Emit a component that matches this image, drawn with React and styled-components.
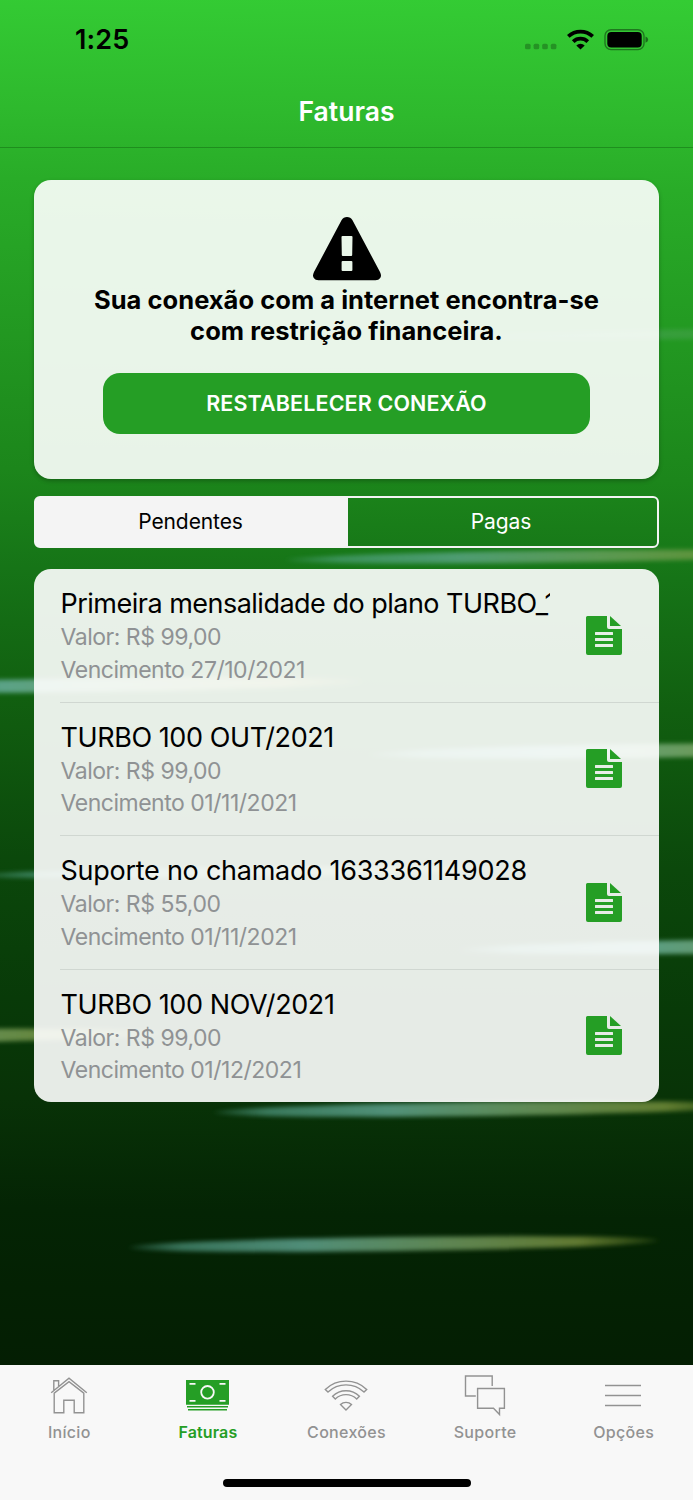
import styled, { createGlobalStyle, css } from "styled-components";

// Data
const invoices = [
  {
    title: "Primeira mensalidade do plano TURBO_100",
    value: "99,00",
    due: "27/10/2021",
    tracking: -0.51,
  },
  {
    title: "TURBO 100 OUT/2021",
    value: "99,00",
    due: "01/11/2021",
    tracking: -0.42,
  },
  {
    title: "Suporte no chamado 1633361149028",
    value: "55,00",
    due: "01/11/2021",
    tracking: -0.26,
  },
  {
    title: "TURBO 100 NOV/2021",
    value: "99,00",
    due: "01/12/2021",
    tracking: -0.42,
  },
];

const streaks = [
  { x: 430, y: 338, opacity: 0.3, size: 5 },
  { x: 285, y: 560.5, opacity: 0.8, size: 6 },
  { x: -170, y: 689, opacity: 1, size: 7 },
  { x: 370, y: 755, opacity: 1, size: 7 },
  { x: -28, y: 876, opacity: 0.8, size: 5 },
  { x: 460, y: 950.5, opacity: 1, size: 7 },
  { x: -370, y: 1040.5, opacity: 0.95, size: 7 },
  { x: 213, y: 1113, opacity: 0.9, size: 7 },
  { x: 128, y: 1248, opacity: 0.9, size: 7 },
];

// Icons
const HomeIcon = () => (
  <svg width="38" height="38" viewBox="0 -0.5 38 38">
    <path d="M1.2 16.2 19 1.6 36.8 16.2M3.8 13.6V4.2H8.6V9.6M4.2 16.6V36.3H13.8V23.8H24.2V36.3H33.8V16.6L19 5.2Z" />
  </svg>
);

const MoneyIcon = () => (
  <svg width="44" height="38" viewBox="0 0 44 38">
    <path className="fill" d="M0 4H43V28.800H0ZM1 30H42V31.600H1ZM2 33H41V34.600H2Z" />
    <circle className="line" cx="21.500" cy="16.300" r="6.300" />
    <path className="line" d="M3.500 7.800H9.500M33.500 7.800H39.500M3.500 24.800H9.500M33.500 24.800H39.500" />
  </svg>
);

const SignalIcon = () => (
  <svg width="44" height="38" viewBox="0 0 44 38">
    <path d="M1.300 13.400A30 30 0 0 1 42.700 13.400L40 16A26.200 26.200 0 0 0 4 16Z" />
    <path d="M8.600 20.200A19.200 19.200 0 0 1 35.400 20.200L32.700 22.900A15.400 15.400 0 0 0 11.300 22.900Z" />
    <path d="M16.500 28.600A7.800 7.800 0 0 1 27.500 28.600L22 34Z" />
  </svg>
);

const ChatIcon = () => (
  <svg width="42" height="38" viewBox="0 3.500 42 38">
    <path d="M11.800 23.500H1.500V3.500H28.200V13.500M13.600 16H40.400V35.800H35.500V42L29.500 35.800H13.600Z" />
  </svg>
);

const MenuIcon = () => (
  <svg width="39" height="38" viewBox="0 0 39 38">
    <path d="M1 9.500H37M1 19.500H37M1 29.500H37" />
  </svg>
);

const tabs = [
  { name: "Início", Icon: HomeIcon },
  { name: "Faturas", Icon: MoneyIcon },
  { name: "Conexões", Icon: SignalIcon },
  { name: "Suporte", Icon: ChatIcon },
  { name: "Opções", Icon: MenuIcon },
];

// Components
function Background() {
  return (
    <Backdrop viewBox="0 0 693 1500">
      <defs>
        <linearGradient id="streak">
          <stop offset="0" stopColor="#5fb09d" stopOpacity="0.2" />
          <stop offset="0.1" stopColor="#5fae9a" stopOpacity="0.65" />
          <stop offset="0.33" stopColor="#68ae9c" stopOpacity="0.85" />
          <stop offset="0.6" stopColor="#81ac72" stopOpacity="0.8" />
          <stop offset="0.85" stopColor="#8ea348" stopOpacity="0.75" />
          <stop offset="1" stopColor="#8ea338" stopOpacity="0.2" />
        </linearGradient>
        <filter id="soft" x="-5%" y="-80%" width="110%" height="260%">
          <feGaussianBlur stdDeviation="3 2.2" />
        </filter>
      </defs>
      {streaks.map((s) => (
        <ellipse
          key={s.y}
          cx={s.x + 266}
          cy={s.y - 4}
          rx="264"
          ry={s.size}
          fill="url(#streak)"
          filter="url(#soft)"
          opacity={s.opacity}
          transform={`rotate(-0.75 ${s.x + 266} ${s.y - 4})`}
        />
      ))}
    </Backdrop>
  );
}

function StatusIcons() {
  return (
    <svg width="126" height="24" viewBox="0 0 126 24">
      <g fill="#000" fillOpacity="0.25">
        <rect x="2" y="15.800" width="5.600" height="5.400" rx="1.500" />
        <rect x="10.600" y="15.800" width="5.600" height="5.400" rx="1.500" />
        <rect x="19.200" y="15.800" width="5.600" height="5.400" rx="1.500" />
        <rect x="27.800" y="15.800" width="5.600" height="5.400" rx="1.500" />
      </g>
      <g fill="none" stroke="#000" strokeWidth="3.800">
        <path d="M45.300 8.300A18 18 0 0 1 69.700 8.300" />
        <path d="M50.200 13.600A10.600 10.600 0 0 1 64.800 13.600" />
      </g>
      <path d="M53.300 17.400A6 6 0 0 1 61.700 17.400L57.500 21.600Z" />
      <rect x="82" y="1.800" width="39" height="19.800" rx="6" fill="none" stroke="#000" strokeOpacity="0.4" strokeWidth="1.400" />
      <rect x="84.300" y="4" width="34.400" height="15.400" rx="4" />
      <path d="M122.500 8.600Q125.200 9.600 125.200 11.700T122.500 14.800Z" fillOpacity="0.45" />
    </svg>
  );
}

function WarningIcon() {
  return (
    <svg width="70" height="66" viewBox="0 0 70 66">
      <path
        fillRule="evenodd"
        d="M29.500 4.300Q31.500 1 35 1T40.500 4.300L68 56Q70 60 68 62.300Q66.800 64.300 63.500 64.300H6.500Q3.200 64.300 2 62.300Q0 60 2 56ZM29.500 21Q29.500 20 30.500 20H39.500Q40.500 20 40.500 21L40.200 39Q40.200 40 39.200 40H30.800Q29.800 40 29.800 39ZM30.600 45H39.400Q40.400 45 40.400 46V54Q40.400 55 39.400 55H30.600Q29.600 55 29.600 54V46Q29.600 45 30.600 45Z"
      />
    </svg>
  );
}

function DocumentIcon() {
  return (
    <svg width="38" height="40" viewBox="0 0 38 40" fill="#259e25">
      <path
        fillRule="evenodd"
        d="M2.500 0H22V11Q22 13 24 13H37V37Q37 39 35 39H3Q1 39 1 37V1.500Q1 0 2.500 0ZM10.500 16Q10 16 10 16.500V18.500Q10 19 10.500 19H27.500Q28 19 28 18.500V16.500Q28 16 27.500 16ZM10.500 22Q10 22 10 22.500V24.500Q10 25 10.500 25H27.500Q28 25 28 24.500V22.500Q28 22 27.500 22ZM10.500 28Q10 28 10 28.500V30.500Q10 31 10.500 31H27.500Q28 31 28 30.500V28.500Q28 28 27.500 28Z"
      />
      <path d="M25 0V10H36Z" />
    </svg>
  );
}

function Invoice({ title, value, due, tracking }) {
  return (
    <InvoiceRow>
      <InvoiceInfo>
        <InvoiceTitle $tracking={tracking}>{title}</InvoiceTitle>
        <InvoiceText>Valor: R$ {value}</InvoiceText>
        <InvoiceText>Vencimento {due}</InvoiceText>
      </InvoiceInfo>
      <DocumentIcon />
    </InvoiceRow>
  );
}

function App() {
  return (
    <Screen>
      <GlobalStyle />
      <Background />
      <StatusBar>
        <Time>1:25</Time>
        <StatusIcons />
      </StatusBar>
      <Header>
        <HeaderTitle>Faturas</HeaderTitle>
      </Header>
      <Content>
        <AlertCard>
          <WarningIcon />
          <AlertText>
            Sua conexão com a internet encontra-se
            <br />
            com restrição financeira.
          </AlertText>
          <RestoreButton>RESTABELECER CONEXÃO</RestoreButton>
        </AlertCard>
        <Segment>
          <SegmentButton $active>Pendentes</SegmentButton>
          <SegmentButton>Pagas</SegmentButton>
        </Segment>
        <InvoiceList>
          {invoices.map((invoice) => (
            <Invoice key={invoice.title} {...invoice} />
          ))}
        </InvoiceList>
      </Content>
      <TabBar>
        <Tabs>
          {tabs.map(({ name, Icon }) => (
            <Tab key={name} $active={name === "Faturas"}>
              <TabIcon>
                <Icon />
              </TabIcon>
              {name}
            </Tab>
          ))}
        </Tabs>
        <HomeIndicator />
      </TabBar>
    </Screen>
  );
}

// Style
const GlobalStyle = createGlobalStyle`
  * {
    box-sizing: border-box;
  }
  body {
    margin: 0;
    font-family: Inter, "Liberation Sans", sans-serif;
  }
  svg {
    display: block;
    flex-shrink: 0;
  }
`;

const Screen = styled.div`
  position: relative;
  width: 693px;
  height: 1500px;
  display: flex;
  flex-direction: column;
  overflow: hidden;
  background: linear-gradient(
    181deg,
    #34cc34 0,
    #2eb92d 120px,
    #29ac28 190px,
    #1c861b 480px,
    #167417 580px,
    #115f10 710px,
    #0b480b 870px,
    #083a08 1010px,
    #083207 1110px,
    #042404 1220px,
    #042103 1300px,
    #041e03 1380px
  );
`;

const Backdrop = styled.svg`
  position: absolute;
  inset: 0;
  width: 100%;
  height: 100%;
`;

const StatusBar = styled.div`
  position: relative;
  height: 80px;
  padding: 0 44px 0 75px;
  display: flex;
  justify-content: space-between;
  align-items: center;
`;

const Time = styled.span`
  font-size: 27px;
  font-weight: 600;
  line-height: 32px;
  letter-spacing: 0.1px;
`;

const Header = styled.header`
  position: relative;
  height: 68px;
  padding-top: 15px;
  display: flex;
  justify-content: center;
  border-bottom: 1px solid rgba(0, 60, 0, 0.3);
`;

const HeaderTitle = styled.h1`
  margin: 0;
  font-size: 26.5px;
  font-weight: 600;
  line-height: 32px;
  color: #fff;
`;

const Content = styled.main`
  position: relative;
  flex: 1;
  padding: 32px 34px 0;
  display: flex;
  flex-direction: column;
`;

const AlertCard = styled.section`
  height: 299px;
  padding-top: 36px;
  display: flex;
  flex-direction: column;
  align-items: center;
  border-radius: 17px;
  background: rgba(255, 255, 255, 0.9);
  box-shadow: 0 2px 4px rgba(0, 0, 0, 0.25);
`;

const AlertText = styled.p`
  margin: 2px 0 0;
  font-size: 25.5px;
  font-weight: 700;
  line-height: 31px;
  letter-spacing: 0.03px;
  text-align: center;
  white-space: nowrap;
`;

const RestoreButton = styled.button`
  width: 487px;
  height: 61px;
  margin-top: 27px;
  padding: 0 0 1px;
  border: none;
  border-radius: 17px;
  background: #259e25;
  color: #fff;
  font-family: inherit;
  font-size: 21.5px;
  font-weight: 600;
  letter-spacing: 0.12px;
`;

const Segment = styled.div`
  height: 52px;
  margin-top: 16.5px;
  display: flex;
  border: 2px solid #f4f4f4;
  border-radius: 6px;
`;

const SegmentButton = styled.button`
  width: ${(props) => (props.$active ? "312px" : "309px")};
  padding: 0 3px 1px 0;
  border: none;
  background: transparent;
  color: #fff;
  font-family: inherit;
  font-size: 21px;
  letter-spacing: -0.1px;
  ${(props) =>
    props.$active &&
    css`
      background: #f4f4f4;
      color: #000;
    `}
`;

const InvoiceList = styled.ul`
  height: 533px;
  margin: 21.5px 0 0;
  padding: 0;
  display: flex;
  flex-direction: column;
  list-style: none;
  border-radius: 17px;
  background: rgba(255, 255, 255, 0.9);
`;

const InvoiceRow = styled.li`
  flex: 1;
  margin-left: 26px;
  padding: 1px 36px 0 0;
  display: flex;
  align-items: center;
  justify-content: space-between;
  &:not(:last-child) {
    border-bottom: 1px solid #d0d7d1;
  }
`;

const InvoiceInfo = styled.div`
  width: 490px;
  padding: 2px 0 0 0.5px;
`;

const InvoiceTitle = styled.h2`
  margin: 0;
  overflow: hidden;
  font-size: 27px;
  font-weight: 400;
  line-height: 34px;
  letter-spacing: ${(props) => props.$tracking}px;
  white-space: nowrap;
`;

const InvoiceText = styled.p`
  margin: 0;
  font-size: 23px;
  line-height: 32.5px;
  letter-spacing: -0.48px;
  color: #8f9294;
`;

const TabBar = styled.nav`
  position: relative;
  height: 135px;
  padding-bottom: 13px;
  display: flex;
  flex-direction: column;
  justify-content: space-between;
  align-items: center;
  background: #f8f8f8;
`;

const Tabs = styled.div`
  width: 100%;
  display: flex;
`;

const Tab = styled.div`
  flex: 1;
  padding-top: 9px;
  display: flex;
  flex-direction: column;
  align-items: center;
  font-size: 16px;
  font-weight: ${(props) => (props.$active ? 600 : 500)};
  line-height: 20px;
  letter-spacing: ${(props) => (props.$active ? 0.15 : 0.3)}px;
  color: ${(props) => (props.$active ? "#259e25" : "#929292")};
`;

const TabIcon = styled.div`
  height: 48px;
  padding-top: 2px;
  svg {
    overflow: visible;
    fill: none;
    stroke: currentColor;
    stroke-width: 1.4;
  }
  svg .fill {
    fill: currentColor;
    stroke: none;
  }
  svg .line {
    stroke: #f8f8f8;
    stroke-width: 1.8;
  }
`;

const HomeIndicator = styled.div`
  width: 248px;
  height: 8px;
  border-radius: 4px;
  background: #000;
`;

export default App;
